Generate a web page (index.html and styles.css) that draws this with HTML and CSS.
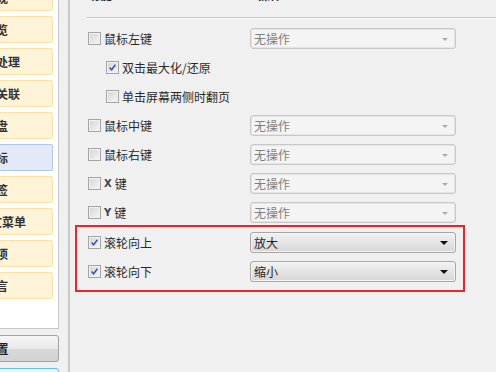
FILE: index.html
```
<html>
  <head>
    <meta charset="utf-8" />
    <title>鼠标设置</title>
    <link rel="stylesheet" href="styles.css">
  </head>
  <body>
    <div class="side">
      <div class="panel">
        <div class="item">常规</div>
        <div class="item">浏览</div>
        <div class="item">图像处理</div>
        <div class="item">文件关联</div>
        <div class="item">键盘</div>
        <div class="item active">鼠标</div>
        <div class="item">标签</div>
        <div class="item">上下文菜单</div>
        <div class="item">选项</div>
        <div class="item">语言</div>
      </div>
      <div class="btn">重置</div>
      <div class="btn default">确定</div>
    </div>
    <div class="sep"></div>
    <div class="main">
      <div class="head">
        <div>功能</div>
        <div class="op">操作</div>
      </div>
      <div class="rows">
        <div class="row">
          <label><span class="cb"></span>鼠标左键</label>
          <div class="combo off">无操作<span class="arrow"></span></div>
        </div>
        <div class="row">
          <label class="sub"><span class="cb on"><svg viewBox="0 0 13 13"><path d="M3 6.5 L5.4 9.2 L10 3.2" /></svg></span>双击最大化/还原</label>
        </div>
        <div class="row">
          <label class="sub"><span class="cb"></span>单击屏幕两侧时翻页</label>
        </div>
        <div class="row">
          <label><span class="cb"></span>鼠标中键</label>
          <div class="combo off">无操作<span class="arrow"></span></div>
        </div>
        <div class="row">
          <label><span class="cb"></span>鼠标右键</label>
          <div class="combo off">无操作<span class="arrow"></span></div>
        </div>
        <div class="row">
          <label><span class="cb"></span><span class="latin">X</span> 键</label>
          <div class="combo off">无操作<span class="arrow"></span></div>
        </div>
        <div class="row">
          <label><span class="cb"></span><span class="latin">Y</span> 键</label>
          <div class="combo off">无操作<span class="arrow"></span></div>
        </div>
      </div>
      <div class="mark">
        <div class="row">
          <label><span class="cb on"><svg viewBox="0 0 13 13"><path d="M3 6.5 L5.4 9.2 L10 3.2" /></svg></span>滚轮向上</label>
          <div class="combo">放大<span class="arrow"></span></div>
        </div>
        <div class="row">
          <label><span class="cb on"><svg viewBox="0 0 13 13"><path d="M3 6.5 L5.4 9.2 L10 3.2" /></svg></span>滚轮向下</label>
          <div class="combo">缩小<span class="arrow"></span></div>
        </div>
      </div>
    </div>
  </body>
</html>
```

FILE: styles.css
```
* {
  margin: 0;
  padding: 0;
  box-sizing: border-box;
}
body {
  display: flex;
  height: 372px;
  overflow: hidden;
  background: #f0f0f0;
  font-family: "Noto Sans CJK SC", "Noto Sans", sans-serif;
  font-size: 12px;
  color: #2a2a2a;
}
.side {
  display: flex;
  flex-direction: column;
  gap: 6px;
  width: 125px;
  margin-left: -66px;
  flex-shrink: 0;
}
.panel {
  height: 350px;
  margin-top: -21px;
  padding: 5px 5px 0 5px;
  background: #fff;
  border-right: 1px solid #c6c6c6;
  border-bottom: 1px solid #c6c6c6;
  overflow: hidden;
  flex-shrink: 0;
}
.item {
  height: 27px;
  margin-bottom: 5px;
  display: flex;
  align-items: center;
  justify-content: center;
  background: #fff3d8;
  border: 1px solid #fbe2a6;
  border-radius: 2px;
  font-weight: bold;
  color: #333;
}
.item.active {
  background: #e2eaf8;
  border-color: #b0c6ec;
}
.btn {
  height: 27px;
  display: flex;
  align-items: center;
  justify-content: center;
  border: 1px solid #a2a2a2;
  border-radius: 3px;
  background: linear-gradient(#f6f6f6, #e8e8e8 50%, #d8d8d8 51%, #d2d2d2);
  font-weight: bold;
  color: #222;
  flex-shrink: 0;
}
.btn.default {
  border-color: #5cc4f2;
}
.sep {
  width: 2px;
  margin-left: 9px;
  background: #c8c8c8;
  flex-shrink: 0;
}
.main {
  flex: 1;
  padding-left: 18px;
}
.head {
  display: grid;
  grid-template-columns: 170px auto;
  height: 31px;
  margin-top: -13px;
  margin-left: -1px;
  padding-left: 1px;
  border-bottom: 1px solid #c8c8c8;
  box-shadow: 0 1px 0 #fafafa;
  font-weight: bold;
  line-height: 16px;
}
.rows {
  margin-top: 6px;
}
.row {
  display: grid;
  grid-template-columns: 162px 206px;
  align-items: center;
  height: 29px;
}
label {
  display: flex;
  align-items: center;
  gap: 3px;
}
label.sub {
  padding-left: 18px;
}
.latin {
  font-family: "DejaVu Sans", sans-serif;
  font-size: 10px;
  font-weight: bold;
  color: #445;
}
.cb {
  width: 13px;
  height: 13px;
  border: 1px solid #a4a4a4;
  background: linear-gradient(135deg, #d4d4d4, #f6f6f6);
  box-shadow: inset 0 0 0 1px #f2f2f2;
  flex-shrink: 0;
}
.cb svg {
  display: block;
  width: 11px;
  height: 11px;
}
.cb path {
  fill: none;
  stroke: #3552b0;
  stroke-width: 1.7;
}
.combo {
  position: relative;
  height: 21px;
  padding-left: 3px;
  display: flex;
  align-items: center;
  border: 1px solid #a6a6a6;
  border-radius: 3px;
  background: linear-gradient(#f2f2f2, #e4e4e4 50%, #d6d6d6);
  box-shadow: inset 0 0 0 1px #f4f4f4;
  color: #1e1e1e;
}
.combo.off {
  border-color: #c8c8c8;
  background: #f4f4f4;
  box-shadow: inset 0 0 0 1px #e4e4e4;
  color: #808080;
}
.arrow {
  position: absolute;
  right: 7px;
  top: 8px;
  border-left: 4px solid transparent;
  border-right: 4px solid transparent;
  border-top: 4px solid #111;
}
.combo.off .arrow {
  top: 9px;
  border-left-width: 3px;
  border-right-width: 3px;
  border-top: 3px solid #aaa;
}
.mark {
  width: fit-content;
  margin-top: -2px;
  margin-left: -13px;
  padding: 1px 7px 4px 11px;
  border: 2px solid #e8242c;
}
```
